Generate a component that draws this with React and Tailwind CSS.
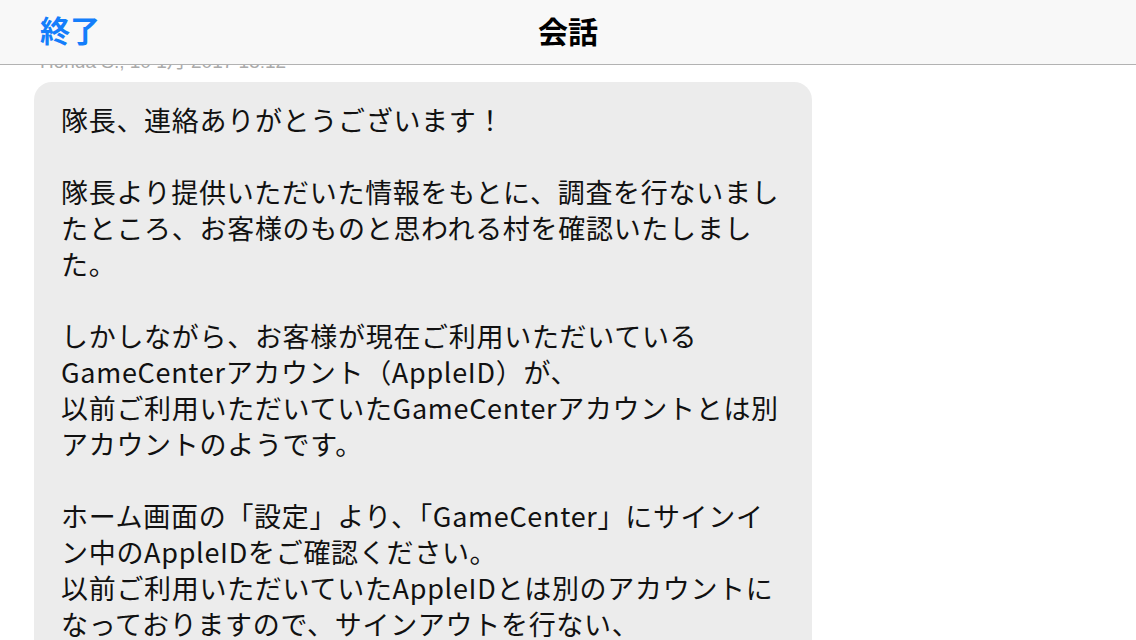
import React from "react";

const lines = [
  "隊長、連絡ありがとうございます！",
  "",
  "隊長より提供いただいた情報をもとに、調査を行ないまし",
  "たところ、お客様のものと思われる村を確認いたしまし",
  "た。",
  "",
  "しかしながら、お客様が現在ご利用いただいている",
  "GameCenterアカウント（AppleID）が、",
  "以前ご利用いただいていたGameCenterアカウントとは別",
  "アカウントのようです。",
  "",
  "ホーム画面の「設定」より、「GameCenter」にサインイ",
  "ン中のAppleIDをご確認ください。",
  "以前ご利用いただいていたAppleIDとは別のアカウントに",
  "なっておりますので、サインアウトを行ない、",
];

export default function App() {
  return (
    <div
      className="w-[1136px] h-[640px] overflow-hidden bg-white flex flex-col"
      style={{ fontFamily: '"Noto Sans CJK JP", "Noto Sans", sans-serif' }}
    >
      <header className="relative z-10 h-[65px] shrink-0 bg-[#f8f8f8] border-b border-[#b2b2b2] flex items-center px-[40px] pb-[6px]">
        <span className="text-[30px] font-bold text-[#147efb] leading-none">終了</span>
        <span className="absolute left-1/2 top-[15px] -translate-x-1/2 text-[30px] font-bold text-black leading-none">
          会話
        </span>
      </header>
      <main className="-mt-[14px] px-[34px] flex flex-col">
        <div
          className="pl-[6px] text-[19px] leading-[22px] text-[#aaaaaa] mb-[9px] whitespace-nowrap"
          style={{ fontFamily: '"Liberation Sans", "Noto Sans CJK JP", sans-serif' }}
        >
          Honda S., 10 1月 2017 15:12
        </div>
        <div className="w-[778px] bg-[#ececec] rounded-[18px] pl-[27px] pt-[20px] pb-[20px]">
          {lines.map((l, i) => (
            <div
              key={i}
              className="text-[27px] leading-[36px] h-[36px] whitespace-nowrap text-[#111111] tracking-[0.7px]"
            >
              {l}
            </div>
          ))}
        </div>
      </main>
    </div>
  );
}
